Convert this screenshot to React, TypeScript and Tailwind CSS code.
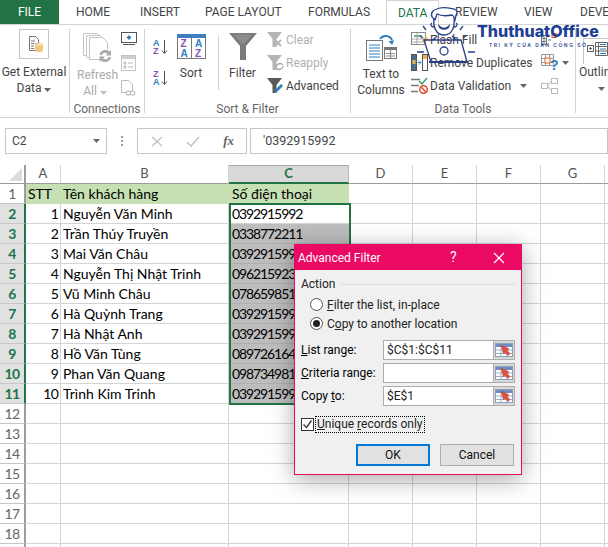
import React from "react";

const ui = "font-['Roboto','Liberation_Sans',sans-serif]";
const cellFont = "font-['Lato','Noto_Sans',sans-serif]";

const Caret = ({ c = "#666" }: { c?: string }) => (
  <svg width="7" height="4" viewBox="0 0 7 4" className="inline-block"><path d="M0 0h7L3.5 4z" fill={c} /></svg>
);

const GetDataIcon = () => (
  <svg width="30" height="30" viewBox="0 0 30 30">
    <rect x=".5" y=".5" width="29" height="29" fill="#fff" stroke="#c6c6c6" />
    <path d="M10.5 7.5h6l3 3v4h-3v7h-6z" fill="#fff" stroke="#777" />
    <path d="M12 12h4M12 14.5h3M12 17h3M12 19.5h3" stroke="#777" />
    <path d="M16 15.5c0-2 8-2 8 0v6c0 2-8 2-8 0z" fill="#efc77e" />
    <ellipse cx="20" cy="15.5" rx="4" ry="1.3" fill="#f6dca8" />
  </svg>
);

const RefreshIcon = () => (
  <svg width="30" height="30" viewBox="0 0 30 30">
    <g fill="#fff" stroke="#c4c4c4">
      <path d="M.5.5h14l4 4v18H.5z" />
      <path d="M3.5 2.5h14l4 4v18h-18z" />
      <path d="M6.5 4.5h13l5 5v17h-18z" />
    </g>
    <circle cx="22" cy="23" r="7" fill="#fff" />
    <path d="M16.5 22a6 6 0 0 1 10-3.5l1.5-1.5v5.500h-5.500l2-2a3.500 3.500 0 0 0-5.500 1.500zM28 24a6 6 0 0 1-10 3.500L16.500 29v-5.500H22l-2 2a3.500 3.500 0 0 0 5.500-1.500z" fill="#a9a9a9" />
  </svg>
);

const MonitorIcon = () => (
  <svg width="16" height="14" viewBox="0 0 16 14">
    <rect x=".5" y=".5" width="15" height="10" fill="#fff" stroke="#555" />
    <path d="M8 3l2.500 2.500L8 8 5.500 5.500z" fill="#2f7fbd" />
    <path d="M2 12.500h12" stroke="#555" />
  </svg>
);
const PropsIcon = () => (
  <svg width="15" height="16" viewBox="0 0 15 16">
    <rect x=".5" y=".5" width="14" height="15" fill="#fff" stroke="#c4c4c4" />
    <rect x="1" y="1" width="13" height="3" fill="#cfcfcf" />
    <path d="M3 7h2v2H3zM3 11h2v2H3z" fill="none" stroke="#bbb" />
    <path d="M7 8h5M7 12h5" stroke="#bbb" />
  </svg>
);
const LinkDocIcon = () => (
  <svg width="15" height="17" viewBox="0 0 15 17">
    <path d="M.5.5h7l4 4v8h-11z" fill="#fff" stroke="#bdbdbd" />
    <rect x="5" y="11" width="5" height="4" rx="2" fill="#fff" stroke="#aaa" />
    <rect x="9" y="11" width="5" height="4" rx="2" fill="#fff" stroke="#aaa" />
  </svg>
);

const SortSmall = ({ top, bot, tc, bc }: { top: string; bot: string; tc: string; bc: string }) => (
  <svg width="15" height="16" viewBox="0 0 15 16">
    <text x="0" y="7" fontSize="9" fontWeight="700" fill={tc} fontFamily="Liberation Sans">{top}</text>
    <text x="0" y="15" fontSize="9" fontWeight="700" fill={bc} fontFamily="Liberation Sans">{bot}</text>
    <path d="M11.500 1v13M9 11.500l2.500 3 2.500-3" fill="none" stroke="#555" />
  </svg>
);

const SortBig = () => (
  <svg width="29" height="25" viewBox="0 0 29 25">
    <rect x=".5" y=".5" width="28" height="24" fill="#fff" stroke="#777" />
    <rect x="0" y="0" width="29" height="4" fill="#3f7fbf" />
    <path d="M14.500 4v20" stroke="#777" />
    <g fontFamily="Liberation Sans" fontSize="10" fontWeight="700">
      <text x="3.500" y="13" fill="#8a4fb0">Z</text>
      <text x="3.500" y="23" fill="#2f7fbd">A</text>
      <text x="18" y="13" fill="#2f7fbd">A</text>
      <text x="18" y="23" fill="#8a4fb0">Z</text>
    </g>
  </svg>
);

const FunnelBig = () => (
  <svg width="28" height="27" viewBox="0 0 28 27">
    <path d="M0 0h28L17 13v14h-6V13z" fill="#7a7a7a" />
    <path d="M5 1.500h18L15 11h-2z" fill="#8c8c8c" />
  </svg>
);
const FunnelSmall = ({ c, kind }: { c: string; kind: "x" | "r" | "p" }) => (
  <svg width="17" height="17" viewBox="0 0 17 17">
    <path d="M0 1h15L9.500 8v8h-4V8z" fill={c} />
    {kind === "x" && <path d="M8 9l6 6M14 9l-6 6" stroke="#b5b5b5" strokeWidth="2" />}
    {kind === "r" && <path d="M9 13a4 4 0 0 1 7-2M16 12a4 4 0 0 1-7 2" fill="none" stroke="#aaa" strokeWidth="1.500" />}
    {kind === "p" && <path d="M7 16l1-3 6-6 2 2-6 6z" fill="#2f7fbd" />}
  </svg>
);

const TextColsIcon = () => (
  <svg width="31" height="28" viewBox="0 0 31 28">
    <path d="M14 6a7 7 0 0 1 12 1" fill="none" stroke="#2f7fbd" strokeWidth="2" />
    <path d="M22.500 8.500l3.800 3.500 1.700-5z" fill="#2f7fbd" />
    <rect x=".5" y="7.500" width="16" height="20" fill="#fff" stroke="#777" />
    <path d="M3 12h11M3 15h11M3 18h11M3 21h11M3 24h11" stroke="#2f7fbd" />
    <rect x="18.500" y="14.500" width="12" height="11" fill="#fff" stroke="#777" />
    <rect x="18" y="14" width="13" height="3" fill="#777" />
    <path d="M24.500 17v8M20 20.500h9M20 23h9" stroke="#888" />
  </svg>
);
const FlashIcon = () => (
  <svg width="17" height="15" viewBox="0 0 17 15">
    <rect x=".5" y=".5" width="14" height="12" fill="#fff" stroke="#888" />
    <path d="M3 4h8" stroke="#3a9a6a" strokeWidth="1.500" />
    <path d="M1 7h13M1 10h13M6 1v11" stroke="#aaa" />
    <path d="M11 9l4-5 2 3-3 4z" fill="#efb54a" />
  </svg>
);
const DupIcon = () => (
  <svg width="17" height="17" viewBox="0 0 17 17">
    <rect x=".5" y=".5" width="5" height="16" fill="#4f6d8f" stroke="#555" />
    <rect x="1.500" y="6" width="3" height="4" fill="#efb54a" />
    <rect x="11.500" y=".5" width="5" height="16" fill="#fff" stroke="#555" />
    <rect x="12" y="1" width="4" height="4" fill="#efb54a" />
    <path d="M6.500 8.500h3M8 6.500l2 2-2 2" fill="none" stroke="#2f7fbd" />
  </svg>
);
const ValidIcon = () => (
  <svg width="17" height="17" viewBox="0 0 17 17">
    <path d="M0 2.500h9M0 8.500h8M0 14.500h7" stroke="#777" strokeWidth="1.500" />
    <path d="M8 4l3 3 5-6" fill="none" stroke="#3a9a6a" strokeWidth="1.500" />
    <circle cx="12.500" cy="12.500" r="3.800" fill="#fff" stroke="#d9502e" strokeWidth="1.500" />
    <path d="M10 10l5 5" stroke="#d9502e" strokeWidth="1.500" />
  </svg>
);
const ConsolIcon = () => (
  <svg width="16" height="15" viewBox="0 0 16 15">
    <path d="M.5 3.500h5v9h-5zM.5 6.500h5M.5 9.500h5M3 3.500v9" fill="#fff" stroke="#777" />
    <path d="M7 8h3" stroke="#2f7fbd" />
    <rect x="11" y="1.500" width="4" height="4" fill="#fff" stroke="#d9502e" />
  </svg>
);
const WhatIfIcon = () => (
  <svg width="17" height="17" viewBox="0 0 17 17">
    <path d="M.5.5h12v11H.5zM4.500.5v11M8.500.5v11M.5 4.500h12M.5 8.500h12" fill="#fff" stroke="#999" />
    <rect x="4" y="4" width="5" height="5" fill="#fff" stroke="#d9682e" />
    <text x="9" y="16" fontSize="14" fontWeight="700" fill="#2f7fbd" fontFamily="Liberation Sans">?</text>
  </svg>
);
const RelIcon = () => (
  <svg width="17" height="16" viewBox="0 0 17 16">
    <rect x=".5" y="5.500" width="6" height="5" fill="#fff" stroke="#bbb" />
    <rect x="10.500" y=".5" width="6" height="5" fill="#fff" stroke="#bbb" />
    <rect x="10.500" y="10.500" width="6" height="5" fill="#fff" stroke="#bbb" />
    <path d="M6.500 8l4-5M6.500 8l4 5" stroke="#bbb" />
  </svg>
);
const OutlineIcon = () => (
  <svg width="21" height="15" viewBox="0 0 21 15">
    <rect x=".5" y="3.500" width="6" height="6" fill="#fff" stroke="#666" />
    <path d="M2 6.500h3M3.500 5v3" stroke="#666" />
    <path d="M8.500.5h12v13h-12zM8.500 4.500h12M8.500 9h12M11.500.5v13" fill="#fff" stroke="#666" />
    <path d="M13 2.500h6M13 7h6M13 11.500h6" stroke="#2f7fbd" />
  </svg>
);

const PickerIcon = () => (
  <svg width="18" height="14" viewBox="0 0 18 14">
    <rect x=".5" y=".5" width="17" height="13" fill="#fff" stroke="#8aa0bd" />
    <rect x="1" y="1" width="16" height="3" fill="#6f8fc4" />
    <path d="M1 7h16M1 10.500h16M6 4v9M12 4v9" stroke="#9bb0cf" />
    <path d="M6 2l8 4-2 1.500 3 3-2 2-3-3L8.500 11z" fill="#e0503f" stroke="#c23a2a" strokeWidth=".5" />
  </svg>
);

const Group = ({ w, label, children, last }: { w: string; label: string; children: React.ReactNode; last?: boolean }) => (
  <div className={`${w} my-[4px] flex flex-col ${last ? "" : "border-r border-[#d4d4d4]"}`}>
    <div className="flex-1 flex min-h-0">{children}</div>
    <div className="h-[12px] leading-[16px] text-center text-[12px] text-[#666] whitespace-nowrap">{label}</div>
  </div>
);

const SmallRow = ({ icon, text, dim, caret }: { icon: React.ReactNode; text: string; dim?: boolean; caret?: boolean }) => (
  <div className={`h-[23px] flex items-center whitespace-nowrap text-[12px] ${dim ? "text-[#b1b1b1]" : "text-[#444]"}`}>
    <span className="w-[19px] flex items-center">{icon}</span>
    <span>{text}</span>
    {caret && <span className="ml-[9px] flex"><Caret /></span>}
  </div>
);

const tabs: [string, string][] = [
  ["HOME", "w-[69px] pl-[17px]"],
  ["INSERT", "w-[60px] pl-[12px]"],
  ["PAGE LAYOUT", "w-[103px] pl-[17px]"],
  ["FORMULAS", "w-[95px] pl-[17px]"],
];

const rows = [
  ["1", "Nguyễn Văn Minh", "0392915992"],
  ["2", "Trần Thúy Truyền", "0338772211"],
  ["3", "Mai Văn Châu", "0392915992"],
  ["4", "Nguyễn Thị Nhật Trinh", "0962159238"],
  ["5", "Vũ Minh Châu", "0786598516"],
  ["6", "Hà Quỳnh Trang", "0392915992"],
  ["7", "Hà Nhật Anh", "0392915992"],
  ["8", "Hồ Văn Tùng", "0897261645"],
  ["9", "Phan Văn Quang", "0987349812"],
  ["10", "Trình Kim Trinh", "0392915992"],
];

const extra = "border-r border-b border-[#d4d4d4]";
const rowHead = "border-r-2 border-[#9c9c9c] border-b border-b-[#c6c6c6] text-[#666]";
const rowHeadSel = "border-r-2 border-[#217346] border-b border-b-[#c6c6c6] bg-[#e1e1e1] text-[#217346] font-bold";

const BlankCols = () => (
  <>
    {[0, 1, 2, 3, 4, 5, 6, 7].map((i) => (
      <div key={i} className={extra} />
    ))}
  </>
);

const RowNum = ({ n, sel }: { n: number; sel?: boolean }) => (
  <div className={`flex items-center justify-center tracking-[-0.5px] text-[14px] ${sel ? rowHeadSel : rowHead}`}>{n}</div>
);

const Field = ({ u, rest, before, value }: { u: string; rest: string; before?: string; value: string }) => (
  <div className="flex items-center h-[20px] mb-[3px]">
    <div className="w-[82px] text-[12px] text-black whitespace-nowrap">
      {before}<span className="underline">{u}</span>{rest}
    </div>
    <div className="w-[132px] h-[20px] flex border border-[#adadad] bg-white">
      <div className="flex-1 text-[12px] leading-[18px] pl-[3px] text-[#222]">{value}</div>
      <div className="w-[22px] -my-px -mr-px bg-[#d8d8d8] border border-[#adadad] flex items-center justify-center"><PickerIcon /></div>
    </div>
  </div>
);

export default function App() {
  return (
    <div className={`relative w-[608px] h-[547px] overflow-hidden bg-white text-[#444] ${ui}`}>
      {/* tabs */}
      <div className="flex h-[25px] border-b border-[#d4d4d4] text-[12px] leading-[25px] whitespace-nowrap overflow-hidden">
        <div className="w-[59px] h-[25px] bg-[#217346] text-white text-center shrink-0">FILE</div>
        {tabs.map(([t, c]) => (
          <div key={t} className={`${c} shrink-0`}>{t}</div>
        ))}
        <div className="w-[53px] h-[25px] pl-[11px] shrink-0 bg-white text-[#217346] border-x border-t border-[#d4d4d4]">DATA</div>
        <div className="w-[72px] pl-[16px] shrink-0">REVIEW</div>
        <div className="w-[53px] pl-[13px] shrink-0">VIEW</div>
        <div className="pl-[16px] shrink-0">DEVE</div>
      </div>

      {/* ribbon */}
      <div className="flex h-[93px] border-b border-[#d4d4d4] overflow-hidden">
        <Group w="w-[70px] shrink-0" label="">
          <div className="w-full flex flex-col items-center pr-px">
            <GetDataIcon />
            <div className="mt-[5px] text-[12px] leading-[16px] text-center whitespace-nowrap">
              Get External<br />Data <span className="align-middle"><Caret /></span>
            </div>
          </div>
        </Group>
        <Group w="w-[75px] shrink-0" label="Connections">
          <div className="w-[49px] pl-[13px] pt-[4px] flex flex-col items-start">
            <RefreshIcon />
            <div className="mt-[4px] -ml-[6px] w-[36px] text-[12px] leading-[16px] text-center text-[#aaa]">
              Refresh<br />All <span className="align-middle"><Caret c="#bbb" /></span>
            </div>
          </div>
          <div className="flex flex-col pl-[2px] pt-[3px] gap-[9px]">
            <MonitorIcon />
            <PropsIcon />
            <LinkDocIcon />
          </div>
        </Group>
        <Group w="w-[206px] shrink-0" label="Sort & Filter">
          <div className="w-[26px] pl-[8px] pt-[10px] flex flex-col gap-[15px]">
            <SortSmall top="A" bot="Z" tc="#2f7fbd" bc="#8a4fb0" />
            <SortSmall top="Z" bot="A" tc="#8a4fb0" bc="#2f7fbd" />
          </div>
          <div className="w-[40px] flex flex-col items-center pt-[5px] text-[12px]">
            <SortBig />
            <div className="mt-[6px] leading-[16px]">Sort</div>
          </div>
          <div className="h-[55px] mt-[6px] ml-[7px] border-l border-[#d4d4d4] w-[10px]" />
          <div className="w-[29px] flex flex-col items-center pt-[4px] text-[12px] text-[#444]">
            <FunnelBig />
            <div className="mt-[5px] leading-[16px]">Filter</div>
          </div>
          <div className="pl-[10px] -mt-[1px] flex flex-col">
            <SmallRow icon={<FunnelSmall c="#b5b5b5" kind="x" />} text="Clear" dim />
            <SmallRow icon={<FunnelSmall c="#b5b5b5" kind="r" />} text="Reapply" dim />
            <SmallRow icon={<FunnelSmall c="#5a5a5a" kind="p" />} text="Advanced" />
          </div>
        </Group>
        <Group w="w-[225px] shrink-0" label="Data Tools">
          <div className="w-[60px] pt-[4px] flex flex-col items-center text-[12px] leading-[16px] text-center">
            <TextColsIcon />
            <div className="mt-[5px] whitespace-nowrap">Text to<br />Columns</div>
          </div>
          <div className="w-[130px] -mt-[1px] flex flex-col">
            <SmallRow icon={<FlashIcon />} text="Flash Fill" />
            <SmallRow icon={<DupIcon />} text="Remove Duplicates" />
            <SmallRow icon={<ValidIcon />} text="Data Validation" caret />
          </div>
          <div className="pt-[3px] flex flex-col gap-[7px]">
            <ConsolIcon />
            <div className="flex items-center gap-[4px]"><WhatIfIcon /><Caret /></div>
            <RelIcon />
          </div>
        </Group>
        <Group w="w-[32px] shrink-0" label="" last>
          <div className="pl-[3px] flex flex-col text-[12px] leading-[16px] whitespace-nowrap">
            <div className="ml-[4px] mt-[9px] h-[26px] w-[40px] border-l border-t border-[#c6c6c6] pl-[3px] pt-[3px]"><OutlineIcon /></div>
            <div>Outline</div>
            <div className="pl-[19px]"><Caret /></div>
          </div>
        </Group>
      </div>

      {/* formula bar */}
      <div className="flex items-center h-[47px] pb-[1px] text-[12px] text-[#444]">
        <div className="ml-[5px] w-[102px] h-[26px] border border-[#c6c6c6] flex items-center justify-between pl-[6px] pr-[6px]">
          <span>C2</span>
          <Caret />
        </div>
        <div className="w-[30px] flex flex-col items-center gap-[2px]">
          <span className="w-[2px] h-[2px] bg-[#999]" />
          <span className="w-[2px] h-[2px] bg-[#999]" />
          <span className="w-[2px] h-[2px] bg-[#999]" />
        </div>
        <div className="w-[110px] h-[26px] border border-[#c6c6c6] flex items-center justify-between pl-[13px] pr-[12px]">
          <svg width="12" height="11" viewBox="0 0 12 11"><path d="M1 1l10 9M11 1L1 10" stroke="#c4c4c4" strokeWidth="1.600" /></svg>
          <svg width="14" height="11" viewBox="0 0 14 11"><path d="M1 6l4 4 8-9" fill="none" stroke="#c4c4c4" strokeWidth="1.600" /></svg>
          <span className="font-['Liberation_Serif',serif] italic font-bold text-[13px] text-[#666]">fx</span>
        </div>
        <div className="ml-[3px] flex-1 h-[26px] border border-[#c6c6c6] pl-[12px] leading-[24px] text-[12.500px] text-[#444]">'0392915992</div>
      </div>

      {/* sheet */}
      <div className={`grid grid-cols-[26px_35px_168px_120px_64px_64px_64px_64px_64px] grid-rows-[19px_20px_repeat(17,20px)_3px] ${cellFont} text-[14px] text-black`}>
        <div className="border-r-2 border-b border-[#9c9c9c] flex items-end justify-end pr-[2px] pb-[2px]">
          <svg width="13" height="13" viewBox="0 0 13 13"><path d="M13 0v13H0z" fill="#dcdcdc" /></svg>
        </div>
        {["A", "B"].map((c) => (
          <div key={c} className="border-r border-b border-r-[#d4d4d4] border-b-[#9c9c9c] flex items-center justify-center text-[#555] text-[13px]">{c}</div>
        ))}
        <div className="bg-[#d9d9d9] border-b-2 border-t border-t-[#aaa] border-[#217346] border-r border-r-[#bbb] flex items-center justify-center text-[#217346] font-bold text-[13px]">C</div>
        {["D", "E", "F", "G"].map((c) => (
          <div key={c} className="border-r border-b border-r-[#d4d4d4] border-b-[#9c9c9c] flex items-center justify-center text-[#555] text-[13px]">{c}</div>
        ))}
        <div className="border-b border-[#9c9c9c]" />

        <RowNum n={1} />
        <div className="bg-[#c6e0b4] pl-[2px] leading-[20px] whitespace-nowrap">STT</div>
        <div className="bg-[#c6e0b4] pl-[2px] leading-[20px] whitespace-nowrap">Tên khách hàng</div>
        <div className="bg-[#c6e0b4] pl-[3px] leading-[20px] whitespace-nowrap">Số điện thoại</div>
        <div className={extra} /><div className={extra} /><div className={extra} /><div className={extra} /><div className={extra} />

        {rows.map(([n, name, phone], i) => (
          <React.Fragment key={n}>
            <RowNum n={i + 2} sel />
            <div className={`${extra} text-right pr-[2px] leading-[19px] tracking-[-0.8px]`}>{n}</div>
            <div className={`${extra} pl-[2px] leading-[19px] whitespace-nowrap`}>{name}</div>
            <div className={`pl-[3px] leading-[19px] overflow-hidden tracking-[-1.100px] border-b ${i === 0 ? "bg-white border-[#d4d4d4]" : "bg-[#bdbdbd] border-[#aeaeae]"}`}>{phone}</div>
            <div className={extra} /><div className={extra} /><div className={extra} /><div className={extra} /><div className={extra} />
          </React.Fragment>
        ))}

        {[12, 13, 14, 15, 16, 17, 18].map((n) => (
          <React.Fragment key={n}>
            <RowNum n={n} />
            <BlankCols />
          </React.Fragment>
        ))}
        <div className="border-r-2 border-[#9c9c9c]" />
        <div className="border-r border-[#d4d4d4]" />
        <div className="border-r border-[#d4d4d4]" />
        <div className="border-r border-[#d4d4d4]" />
        <div className="border-r border-[#d4d4d4]" />
        <div className="border-r border-[#d4d4d4]" />
        <div className="border-r border-[#d4d4d4]" />
        <div className="border-r border-[#d4d4d4]" />
      </div>

      {/* selection outline */}
      <div className="absolute left-[229px] top-[203px] w-[122px] h-[202px] border-2 border-[#217346]" />

      {/* dialog */}
      <div className={`absolute left-[294px] top-[244px] w-[228px] h-[231px] bg-[#f0f0f0] border border-[#ea0a63] shadow-[0_4px_22px_rgba(0,0,0,0.35)] text-[12px] ${ui}`}>
        <div className="h-[25px] bg-[#ea0a63] flex items-center text-white">
          <span className="pl-[3px] text-[12px] w-[155px]">Advanced Filter</span>
          <span className="w-[10px] text-[14px]">?</span>
          <span className="ml-[33px]">
            <svg width="12" height="12" viewBox="0 0 12 12"><path d="M1 1l10 10M11 1L1 11" stroke="#fff" strokeWidth="1.200" /></svg>
          </span>
        </div>
        <div className="px-[6px] pt-[6px]">
          <div className="flex items-center h-[16px] text-[#222]">
            <span>Action</span>
            <span className="flex-1 ml-[6px] border-t border-[#dcdcdc]" />
          </div>
          <div className="pl-[9px] mt-[3px]">
            <div className="flex items-center h-[19px] gap-[4px] text-[#222]">
              <span className="w-[13px] h-[13px] rounded-full border border-[#555] bg-white" />
              <span><span className="underline">F</span>ilter the list, in-place</span>
            </div>
            <div className="flex items-center h-[19px] gap-[4px] text-[#222]">
              <span className="w-[13px] h-[13px] rounded-full border border-[#555] bg-white flex items-center justify-center">
                <span className="w-[7px] h-[7px] rounded-full bg-[#222]" />
              </span>
              <span>C<span className="underline">o</span>py to another location</span>
            </div>
          </div>
          <div className="mt-[7px]">
            <Field u="L" rest="ist range:" value="$C$1:$C$11" />
            <Field u="C" rest="riteria range:" value="" />
            <Field before="Copy " u="t" rest="o:" value="$E$1" />
          </div>
          <div className="mt-[11px] flex items-center">
            <span className="w-[13px] h-[13px] border border-[#333] bg-white flex items-center justify-center">
              <svg width="11" height="11" viewBox="0 0 11 11"><path d="M1.500 5.500l3 3 5-7" fill="none" stroke="#333" strokeWidth="1.300" /></svg>
            </span>
            <span className="ml-[2px] outline-1 outline-dotted outline-black px-[1px] leading-[15px] text-[#222]">
              <span className="underline">U</span>nique <span className="underline">r</span>ecords only
            </span>
          </div>
          <div className="mt-[12px] flex justify-end gap-[10px] pr-[1px]">
            <div className="w-[74px] h-[22px] bg-[#e1e1e1] border-2 border-[#0078d7] flex items-center justify-center text-[#111]">OK</div>
            <div className="w-[74px] h-[22px] bg-[#e1e1e1] border border-[#adadad] flex items-center justify-center text-[#111]">Cancel</div>
          </div>
        </div>
      </div>

      {/* watermark */}
      <div className="absolute left-[416px] top-0 pointer-events-none">
        <svg width="62" height="66" viewBox="0 0 62 66" fill="none" stroke="#27408b" strokeWidth="1.300">
          <g transform="translate(1 3)">
            <path d="M15 14c-2-5 2-7 5-8 5-3 12-1 17 0 3 1 4 4 2 6l-1 5c-1-2-1-4-3-5-5 1-11 1-15-1-1 2-1 4-2 6z" fill="#fff" />
            <path d="M17 15c-1 9 2 17 10 17s11-8 10-16" />
            <path d="M15 20c-2 1-1 4 2 4M39 20c2 1 1 4-2 4" />
            <path d="M22 23c3 3 7 3 10 0-1 4-9 4-10 0z" fill="#27408b" />
          </g>
          <path d="M8 40h37l6 22H15z" fill="none" />
          <circle cx="28" cy="51" r="4" />
          <path d="M13 62h39" strokeWidth="1.800" />
          <path d="M7 26l3 4M47 26l-3 4M4 36l3 2M50 36l-3 2M1 52h7M52 52h7" />
          <path d="M21 36l-4 4M36 36l4 4" />
        </svg>
      </div>
      <div className="absolute left-[477px] top-[19px] pointer-events-none font-['Inter',sans-serif] font-extrabold text-[16px] leading-[24px] text-[#1f3f94] whitespace-nowrap">ThuthuatOffice</div>
      <div className="absolute left-[489px] top-[42px] pointer-events-none font-['Inter',sans-serif] font-semibold text-[5px] leading-[7px] tracking-[1.500px] text-[#1f3f94] whitespace-nowrap">TRI KỶ CỦA DÂN CÔNG SỞ</div>
    </div>
  );
}
